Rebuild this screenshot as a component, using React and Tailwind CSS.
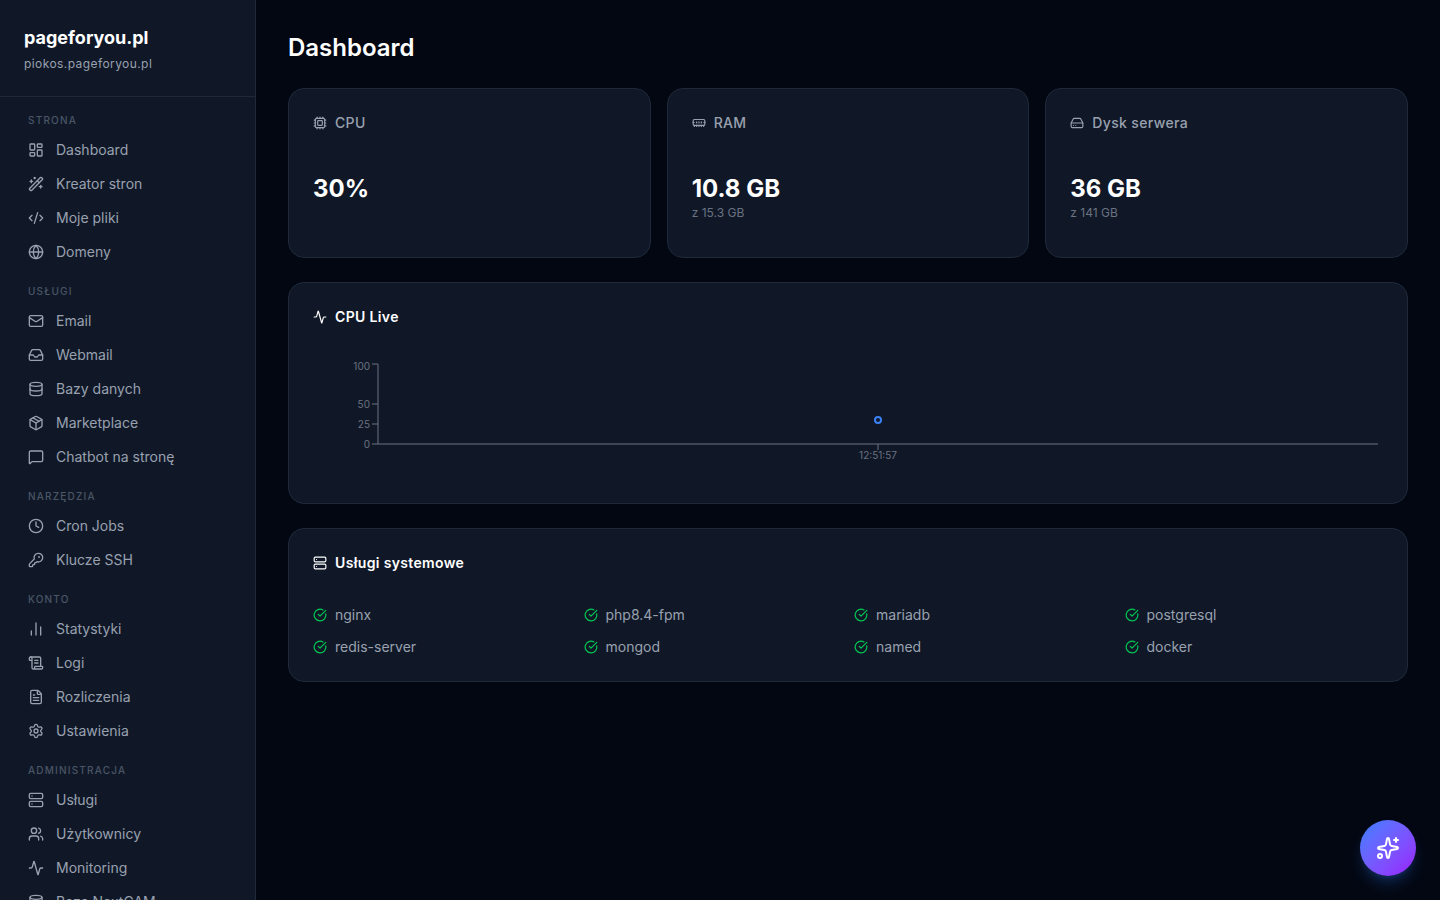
import React from "react";
import {
  LayoutDashboard, WandSparkles, CodeXml, Globe, Mail, Inbox, Database, Package, MessageSquare,
  Clock, KeyRound, ChartNoAxesColumn, ScrollText, FileText, Settings, Server, Users, Activity,
  Cpu, MemoryStick, HardDrive, CircleCheckBig, Sparkles,
} from "lucide-react";

const sections = [
  { label: "Strona", items: [["Dashboard", LayoutDashboard], ["Kreator stron", WandSparkles], ["Moje pliki", CodeXml], ["Domeny", Globe]] },
  { label: "Usługi", items: [["Email", Mail], ["Webmail", Inbox], ["Bazy danych", Database], ["Marketplace", Package], ["Chatbot na stronę", MessageSquare]] },
  { label: "Narzędzia", items: [["Cron Jobs", Clock], ["Klucze SSH", KeyRound]] },
  { label: "Konto", items: [["Statystyki", ChartNoAxesColumn], ["Logi", ScrollText], ["Rozliczenia", FileText], ["Ustawienia", Settings]] },
  { label: "Administracja", items: [["Usługi", Server], ["Użytkownicy", Users], ["Monitoring", Activity], ["Baza NextCAM", Database]] },
];

const stats = [
  { label: "CPU", Icon: Cpu, value: "30%" },
  { label: "RAM", Icon: MemoryStick, value: "10.8 GB", sub: "z 15.3 GB" },
  { label: "Dysk serwera", Icon: HardDrive, value: "36 GB", sub: "z 141 GB" },
];

const services = ["nginx", "php8.4-fpm", "mariadb", "postgresql", "redis-server", "mongod", "named", "docker"];

function Chart() {
  const axis = "#6b7280";
  const tick = { fill: "#6b7280", fontSize: 10, textAnchor: "end", dominantBaseline: "central" };
  return (
    <svg width="1070" height="130" viewBox="0 0 1070 130" className="block">
      <g transform="translate(-313,-343)">
        <path d="M378 364V444H1378" fill="none" stroke={axis} strokeWidth="1" />
        {[[100, 364, 366], [50, 404, 404], [25, 424, 424], [0, 444, 444]].map(([v, y, ty]) => (
          <g key={v}>
            <path d={`M372 ${y}H378`} stroke={axis} />
            <text x="370" y={ty} {...tick}>{v}</text>
          </g>
        ))}
        <path d="M878 444V450" stroke={axis} />
        <text x="878" y="455" fill="#6b7280" fontSize="10" textAnchor="middle" dominantBaseline="central">12:51:57</text>
        <circle cx="878" cy="420" r="3" fill="#111827" stroke="#3b82f6" strokeWidth="2" />
      </g>
    </svg>
  );
}

export default function App() {
  return (
    <div className="flex h-screen overflow-hidden bg-[#030712] font-['Inter',sans-serif] antialiased">
      <aside className="w-64 shrink-0 h-full overflow-hidden bg-gray-900 border-r border-gray-800 flex flex-col">
        <div className="h-[97px] shrink-0 border-b border-gray-800 px-6 pt-6">
          <div className="text-lg font-bold text-white leading-7">pageforyou.pl</div>
          <div className="text-xs text-gray-400 mt-1 tracking-[0.42px]">piokos.pageforyou.pl</div>
        </div>
        <nav className="px-3 pt-4 flex flex-col gap-[15px]">
          {sections.map((s) => (
            <div key={s.label}>
              <div className="px-4 mb-[5px] text-[10px] leading-[15px] font-medium uppercase tracking-[1.2px] text-gray-600">{s.label}</div>
              {s.items.map(([name, Icon]) => (
                <div key={name} className="flex items-center gap-3 px-4 h-[34px] text-sm text-gray-400">
                  <Icon size={16} strokeWidth={2} className="shrink-0" />
                  <span>{name}</span>
                </div>
              ))}
            </div>
          ))}
        </nav>
      </aside>

      <main className="flex-1 h-full overflow-hidden px-8 pt-8">
        <h1 className="text-2xl font-semibold text-white leading-8 mb-6">Dashboard</h1>

        <div className="grid grid-cols-3 gap-4 mb-6">
          {stats.map(({ label, Icon, value, sub }) => (
            <div key={label} className="h-[170px] rounded-2xl bg-gray-900 border border-gray-800 p-6">
              <div className="flex items-center gap-2 h-5 text-sm font-medium tracking-wide text-gray-400">
                <Icon size={14} className="shrink-0" />
                <span>{label}</span>
              </div>
              <div className="mt-10 text-2xl font-bold text-white leading-8">{value}</div>
              {sub && <div className="text-xs text-gray-500 leading-4">{sub}</div>}
            </div>
          ))}
        </div>

        <div className="rounded-2xl bg-gray-900 border border-gray-800 px-6 pt-6 h-[222px] mb-6">
          <div className="flex items-center gap-2 h-5 text-sm font-semibold tracking-wide text-white">
            <Activity size={14} className="shrink-0" />
            <span>CPU Live</span>
          </div>
          <div className="mt-4">
            <Chart />
          </div>
        </div>

        <div className="rounded-2xl bg-gray-900 border border-gray-800 p-6">
          <div className="flex items-center gap-2 h-5 text-sm font-semibold tracking-wide text-white mb-8">
            <Server size={14} className="shrink-0" />
            <span>Usługi systemowe</span>
          </div>
          <div className="grid grid-cols-4 gap-3">
            {services.map((s) => (
              <div key={s} className="flex items-center gap-2 h-5 text-sm text-gray-400">
                <CircleCheckBig size={14} className="shrink-0 text-green-500" />
                <span>{s}</span>
              </div>
            ))}
          </div>
        </div>
      </main>

      <button className="fixed right-6 bottom-6 w-14 h-14 rounded-full bg-gradient-to-br from-blue-500 to-purple-600 flex items-center justify-center text-white shadow-lg shadow-blue-500/25">
        <Sparkles size={24} />
      </button>
    </div>
  );
}
